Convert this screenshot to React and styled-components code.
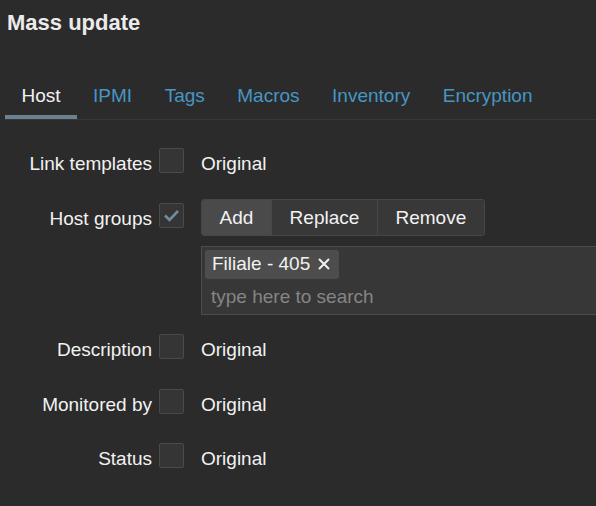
import styled, { createGlobalStyle } from "styled-components";

const GlobalStyle = createGlobalStyle`
  html, body {
    margin: 0;
    padding: 0;
    background: #2b2b2b;
    overflow: hidden;
  }
  body {
    font-family: "Liberation Sans", Arial, sans-serif;
    color: #f2f2f2;
  }
`;

const Page = styled.div`
  width: 596px;
  height: 506px;
  background: #2b2b2b;
  overflow: hidden;
`;

const Title = styled.h1`
  margin: 0;
  padding: 10px 0 0 7px;
  font-size: 22px;
  line-height: 25px;
  font-weight: bold;
  color: #ebebeb;
`;

const TabList = styled.ul`
  display: flex;
  list-style: none;
  margin: 49px 0 0 5px;
  padding: 0;
  border-bottom: 1px solid #383838;
`;

const Tab = styled.li`
  padding: 1px 16px 8px 16.5px;
  font-size: 19px;
  line-height: 22px;
  color: ${(p) => (p.$active ? "#f2f2f2" : "#4796c4")};
  border-bottom: 4px solid ${(p) => (p.$active ? "#6c818e" : "transparent")};
  cursor: pointer;
`;

const Form = styled.div`
  display: flex;
  flex-direction: column;
  gap: 15.5px;
  padding-top: 24px;
`;

const Row = styled.div`
  display: flex;
  align-items: flex-start;
`;

const Label = styled.div`
  flex-shrink: 0;
  width: 152px;
  text-align: right;
  font-size: 19px;
  line-height: 39px;
  white-space: nowrap;
`;

const Check = styled.div`
  width: 23px;
  height: 23px;
  margin: 4px 0 0 7px;
  background: #353535;
  border: 1px solid #4a4a4a;
  border-radius: 2px;
  display: flex;
  align-items: center;
  justify-content: center;
  flex-shrink: 0;
`;

const Content = styled.div`
  margin-left: 17px;
  display: flex;
  flex-direction: column;
  gap: 10px;
  flex-shrink: 0;
`;

const Value = styled.span`
  font-size: 19px;
  line-height: 39px;
`;

const Segmented = styled.div`
  display: flex;
  height: 37px;
  border: 1px solid #474747;
  border-radius: 3px;
  overflow: hidden;
  box-sizing: border-box;
  align-self: flex-start;
`;

const Segment = styled.div`
  padding: 0 17.6px;
  font-size: 19px;
  line-height: 35px;
  background: ${(p) => (p.$selected ? "#4a4a4a" : "#383838")};
  border-left: ${(p) => (p.$first ? "none" : "1px solid #474747")};
`;

const Multi = styled.div`
  width: 460px;
  height: 69px;
  box-sizing: border-box;
  padding: 3px;
  background: #373737;
  border: 1px solid #4c4c4c;
`;

const Chip = styled.div`
  display: inline-flex;
  align-items: center;
  gap: 8px;
  height: 29px;
  padding: 0 9px 0 7px;
  background: #4d4d4d;
  border-radius: 3px;
  font-size: 19px;
`;

const Search = styled.div`
  margin-top: 4px;
  height: 28px;
  padding-left: 6px;
  font-size: 19px;
  line-height: 27px;
  color: #858585;
`;

const CheckMark = () => (
  <svg width="17" height="13" viewBox="0 0 17 13">
    <polyline
      points="2,6.5 6.5,11 15,2"
      fill="none"
      stroke="#6f8c9e"
      strokeWidth="2.6"
    />
  </svg>
);

const Cross = () => (
  <svg width="12" height="12" viewBox="0 0 12 12">
    <path d="M1 1 L11 11 M11 1 L1 11" stroke="#f2f2f2" strokeWidth="2" />
  </svg>
);

const SimpleRow = ({ label }) => (
  <Row>
    <Label>{label}</Label>
    <Check />
    <Content>
      <Value>Original</Value>
    </Content>
  </Row>
);

const tabs = ["Host", "IPMI", "Tags", "Macros", "Inventory", "Encryption"];

export default function App() {
  return (
    <Page>
      <GlobalStyle />
      <Title>Mass update</Title>
      <TabList>
        {tabs.map((t, i) => (
          <Tab key={t} $active={i === 0}>
            {t}
          </Tab>
        ))}
      </TabList>
      <Form>
        <SimpleRow label="Link templates" />
        <Row>
          <Label>Host groups</Label>
          <Check>
            <CheckMark />
          </Check>
          <Content>
            <Segmented>
              <Segment $first $selected>
                Add
              </Segment>
              <Segment>Replace</Segment>
              <Segment>Remove</Segment>
            </Segmented>
            <Multi>
              <Chip>
                Filiale - 405
                <Cross />
              </Chip>
              <Search>type here to search</Search>
            </Multi>
          </Content>
        </Row>
        <SimpleRow label="Description" />
        <SimpleRow label="Monitored by" />
        <SimpleRow label="Status" />
      </Form>
    </Page>
  );
}
